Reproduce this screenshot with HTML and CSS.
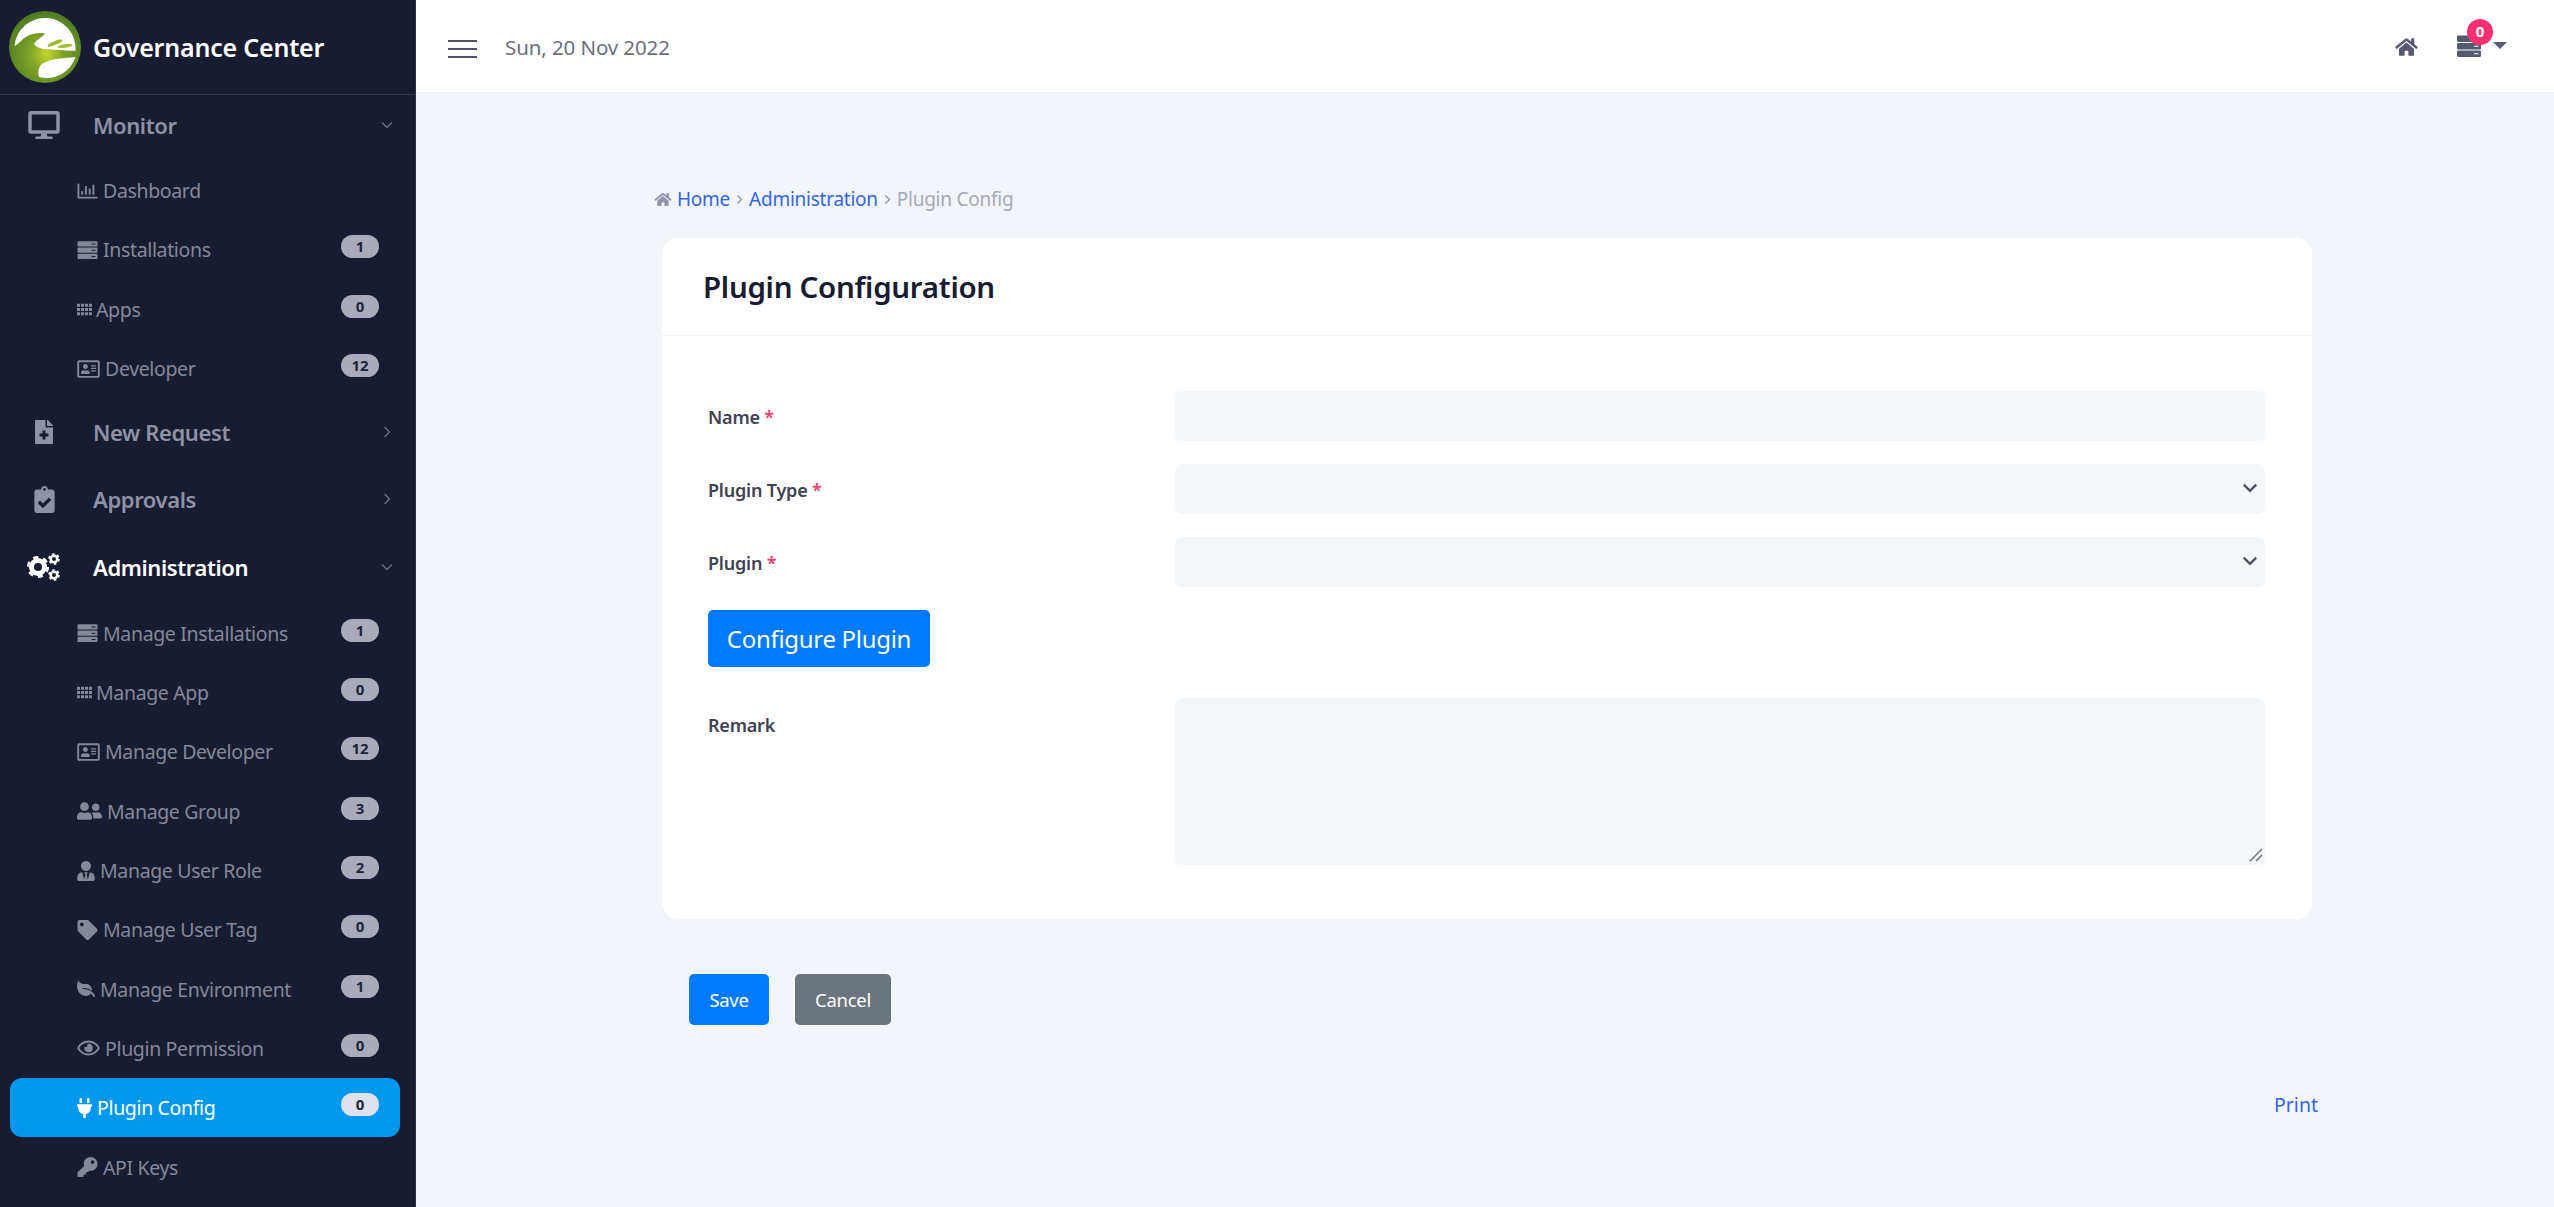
FILE: index.html
```html
<!DOCTYPE html>
<html lang="en">
<head>
    <meta charset="UTF-8">
    <title>Plugin Config</title>
    <link rel="stylesheet" href="styles.css">
</head>
<body>
    <svg class="icon-defs" xmlns="http://www.w3.org/2000/svg">
        <symbol id="i-desktop" viewBox="0 0 576 512"><path d="M528 0H48C21.5 0 0 21.5 0 48v320c0 26.5 21.5 48 48 48h192l-16 48h-72c-13.3 0-24 10.7-24 24s10.7 24 24 24h272c13.3 0 24-10.7 24-24s-10.7-24-24-24h-72l-16-48h192c26.5 0 48-21.5 48-48V48c0-26.5-21.5-48-48-48zm-16 352H64V64h448v288z"/></symbol>
        <symbol id="i-chart" viewBox="0 0 512 512"><path d="M396.8 352h22.4c6.4 0 12.8-6.4 12.8-12.8V108.8c0-6.4-6.4-12.8-12.8-12.8h-22.4c-6.4 0-12.8 6.4-12.8 12.8v230.4c0 6.4 6.4 12.8 12.8 12.8zm-192 0h22.4c6.4 0 12.8-6.4 12.8-12.8V140.8c0-6.4-6.4-12.8-12.8-12.8h-22.4c-6.4 0-12.8 6.4-12.8 12.8v198.4c0 6.4 6.4 12.8 12.8 12.8zm96 0h22.4c6.4 0 12.8-6.4 12.8-12.8V204.8c0-6.4-6.4-12.8-12.8-12.8h-22.4c-6.4 0-12.8 6.4-12.8 12.8v134.4c0 6.4 6.4 12.8 12.8 12.8zM496 400H48V80c0-8.84-7.16-16-16-16H16C7.16 64 0 71.16 0 80v336c0 17.67 14.33 32 32 32h464c8.84 0 16-7.16 16-16v-16c0-8.84-7.16-16-16-16zm-387.2-48h22.4c6.4 0 12.8-6.4 12.8-12.8v-70.4c0-6.4-6.4-12.8-12.8-12.8h-22.4c-6.4 0-12.8 6.4-12.8 12.8v70.4c0 6.4 6.4 12.8 12.8 12.8z"/></symbol>
        <symbol id="i-server" viewBox="0 0 512 512"><path fill-rule="evenodd" d="M24 32h464a24 24 0 0 1 24 24v88a24 24 0 0 1-24 24H24a24 24 0 0 1-24-24V56a24 24 0 0 1 24-24zm336 56v24h100V88zM24 192h464a24 24 0 0 1 24 24v88a24 24 0 0 1-24 24H24a24 24 0 0 1-24-24v-88a24 24 0 0 1 24-24zm336 56v24h100v-24zM24 352h464a24 24 0 0 1 24 24v88a24 24 0 0 1-24 24H24a24 24 0 0 1-24-24v-88a24 24 0 0 1 24-24zm336 56v24h100v-24z"/></symbol>
        <symbol id="i-th" viewBox="0 0 512 400"><path d="M0 0h104v104H0zM136 0h104v104H136zM272 0h104v104H272zM408 0h104v104H408zM0 148h104v104H0zM136 148h104v104H136zM272 148h104v104H272zM408 148h104v104H408zM0 296h104v104H0zM136 296h104v104H136zM272 296h104v104H272zM408 296h104v104H408z"/></symbol>
        <symbol id="i-idcard" viewBox="0 0 576 512"><path d="M528 32H48C21.5 32 0 53.5 0 80v352c0 26.5 21.5 48 48 48h480c26.5 0 48-21.5 48-48V80c0-26.5-21.5-48-48-48zm0 400H48V80h480v352zM208 256c35.3 0 64-28.7 64-64s-28.7-64-64-64-64 28.7-64 64 28.7 64 64 64zm-89.6 128h179.2c12.4 0 22.4-8.6 22.4-19.2v-19.2c0-31.8-30.1-57.6-67.2-57.6-10.8 0-18.7 8-44.8 8-26.9 0-33.4-8-44.8-8-37.1 0-67.2 25.8-67.2 57.6v19.2c0 10.6 10 19.2 22.4 19.2zM360 320h112c4.4 0 8-3.6 8-8v-16c0-4.4-3.6-8-8-8H360c-4.4 0-8 3.6-8 8v16c0 4.4 3.6 8 8 8zm0-64h112c4.4 0 8-3.6 8-8v-16c0-4.4-3.6-8-8-8H360c-4.4 0-8 3.6-8 8v16c0 4.4 3.6 8 8 8zm0-64h112c4.4 0 8-3.6 8-8v-16c0-4.4-3.6-8-8-8H360c-4.4 0-8 3.6-8 8v16c0 4.4 3.6 8 8 8z"/></symbol>
        <symbol id="i-file" viewBox="0 0 384 512"><path d="M377 105L279.1 7c-4.5-4.5-10.6-7-17-7H256v128h128v-6.1c0-6.3-2.5-12.4-7-16.9zm-153 31V0H24C10.7 0 0 10.7 0 24v464c0 13.3 10.7 24 24 24h336c13.3 0 24-10.7 24-24V160H248c-13.2 0-24-10.8-24-24zm64 160v48c0 4.4-3.6 8-8 8h-56v56c0 4.4-3.6 8-8 8h-48c-4.4 0-8-3.6-8-8v-56h-56c-4.4 0-8-3.6-8-8v-48c0-4.4 3.6-8 8-8h56v-56c0-4.4 3.6-8 8-8h48c4.4 0 8 3.6 8 8v56h56c4.4 0 8 3.6 8 8z"/></symbol>
        <symbol id="i-clipboard" viewBox="0 0 384 512"><path d="M336 64h-80c0-35.3-28.7-64-64-64s-64 28.7-64 64H48C21.5 64 0 85.5 0 112v352c0 26.5 21.5 48 48 48h288c26.5 0 48-21.5 48-48V112c0-26.5-21.5-48-48-48zM192 40c13.3 0 24 10.7 24 24s-10.7 24-24 24-24-10.7-24-24 10.7-24 24-24zm121.2 231.8l-143 141.8c-4.7 4.7-12.3 4.6-17-.1l-82.6-83.3c-4.7-4.7-4.6-12.3.1-17L99.1 285c4.7-4.7 12.3-4.6 17 .1l46 46.4 106-105.2c4.7-4.7 12.3-4.6 17 .1l28.2 28.4c4.7 4.8 4.6 12.3-.1 17z"/></symbol>
        <symbol id="i-cogs" viewBox="0 0 34 28">
            <circle cx="11" cy="14" r="6.5" fill="none" stroke="currentColor" stroke-width="5"/>
            <circle cx="11" cy="14" r="9.8" fill="none" stroke="currentColor" stroke-width="2.6" stroke-dasharray="5.1 5.16"/>
            <circle cx="27" cy="6" r="3.25" fill="none" stroke="currentColor" stroke-width="2.5"/>
            <circle cx="27" cy="6" r="5" fill="none" stroke="currentColor" stroke-width="1.6" stroke-dasharray="2.6 2.63"/>
            <circle cx="27" cy="22" r="3.25" fill="none" stroke="currentColor" stroke-width="2.5"/>
            <circle cx="27" cy="22" r="5" fill="none" stroke="currentColor" stroke-width="1.6" stroke-dasharray="2.6 2.63"/>
        </symbol>
        <symbol id="i-users" viewBox="0 0 640 512"><path d="M192 256c61.9 0 112-50.1 112-112S253.9 32 192 32 80 82.1 80 144s50.1 112 112 112zm76.8 32h-8.3c-20.8 10-43.9 16-68.5 16s-47.6-6-68.5-16h-8.3C51.6 288 0 339.6 0 403.2V432c0 26.5 21.5 48 48 48h288c26.5 0 48-21.5 48-48v-28.8c0-63.6-51.6-115.2-115.2-115.2zM480 256c53 0 96-43 96-96s-43-96-96-96-96 43-96 96 43 96 96 96zm48 32h-3.8c-13.9 4.8-28.6 8-44.2 8s-30.3-3.2-44.2-8H432c-20.4 0-39.2 5.9-55.7 15.4 24.4 26.3 39.7 61.2 39.7 99.8v38.4c0 2.2-.5 4.3-.6 6.4H592c26.5 0 48-21.5 48-48 0-61.9-50.1-112-112-112z"/></symbol>
        <symbol id="i-usertie" viewBox="0 0 448 512"><path d="M224 256c70.7 0 128-57.3 128-128S294.7 0 224 0 96 57.3 96 128s57.3 128 128 128zm95.8 32.6L272 480l-32-136 32-56h-96l32 56-32 136-47.8-191.4C56.9 292 0 350.3 0 422.4V464c0 26.5 21.5 48 48 48h352c26.5 0 48-21.5 48-48v-41.6c0-72.1-56.9-130.4-128.2-133.8z"/></symbol>
        <symbol id="i-tag" viewBox="0 0 512 512"><path d="M0 252.118V48C0 21.49 21.49 0 48 0h204.118a48 48 0 0 1 33.941 14.059l211.882 211.882c18.745 18.745 18.745 49.137 0 67.882L293.823 497.941c-18.745 18.745-49.137 18.745-67.882 0L14.059 286.059A48 48 0 0 1 0 252.118zM112 64c-26.51 0-48 21.49-48 48s21.49 48 48 48 48-21.49 48-48-21.49-48-48-48z"/></symbol>
        <symbol id="i-leaf" viewBox="0 0 576 512"><path d="M546.2 9.7c-5.6-12.5-21.6-13-28.3-1.2C486.9 62.4 431.4 96 368 96h-80C182 96 96 182 96 288c0 7 .8 13.7 1.5 20.5C161.3 262.8 253.4 224 384 224c8.8 0 16 7.2 16 16s-7.2 16-16 16C132.6 256 26 410.1 2.4 468c-6.6 16.3 1.2 34.9 17.5 41.6 16.4 6.8 35-1.1 41.8-17.3 1.5-3.6 20.9-47.9 71.9-90.6 32.4 43.9 94 85.8 174.9 77.2C465.5 467.5 576 326.7 576 154.3c0-50.2-10.8-102.2-29.8-144.6z"/></symbol>
        <symbol id="i-eye" viewBox="0 0 576 512"><path d="M288 144a110.94 110.94 0 0 0-31.24 5 55.4 55.4 0 0 1 7.24 27 56 56 0 0 1-56 56 55.4 55.4 0 0 1-27-7.24A111.71 111.71 0 1 0 288 144zm284.52 97.4C518.29 135.59 410.93 64 288 64S57.68 135.64 3.48 241.41a32.35 32.35 0 0 0 0 29.19C57.71 376.41 165.07 448 288 448s230.32-71.64 284.52-177.41a32.35 32.35 0 0 0 0-29.19zM288 400c-98.65 0-189.09-55-237.93-144C98.91 167 189.34 112 288 112s189.09 55 237.93 144C477.1 345 386.66 400 288 400z"/></symbol>
        <symbol id="i-plug" viewBox="0 0 384 512"><path d="M320,32a32,32,0,0,0-64,0v96h64Zm48,128H16A16,16,0,0,0,0,176v32a16,16,0,0,0,16,16H32v32A160.07,160.07,0,0,0,160,412.8V512H224V412.8A160.07,160.07,0,0,0,352,256V224h16a16,16,0,0,0,16-16V176A16,16,0,0,0,368,160ZM128,32a32,32,0,0,0-64,0v96h64Z"/></symbol>
        <symbol id="i-key" viewBox="0 0 512 512"><path d="M512 176.001C512 273.203 433.202 352 336 352c-11.22 0-22.19-1.062-32.827-3.069l-24.012 27.014A23.999 23.999 0 0 1 261.223 384H224v40c0 13.255-10.745 24-24 24h-40v40c0 13.255-10.745 24-24 24H24c-13.255 0-24-10.745-24-24v-78.059c0-6.365 2.529-12.47 7.029-16.971l161.802-161.802C163.108 213.814 160 195.271 160 176 160 78.798 238.797.001 335.999 0 433.488-.001 512 78.511 512 176.001zM336 128c0 26.51 21.49 48 48 48s48-21.49 48-48-21.49-48-48-48-48 21.49-48 48z"/></symbol>
        <symbol id="i-home" viewBox="0 0 576 512"><path d="M280.37 148.26L96 300.11V464a16 16 0 0 0 16 16l112.06-.29a16 16 0 0 0 15.92-16V368a16 16 0 0 1 16-16h64a16 16 0 0 1 16 16v95.64a16 16 0 0 0 16 16.05L464 480a16 16 0 0 0 16-16V300L295.67 148.26a12.19 12.19 0 0 0-15.3 0zM571.6 251.47L488 182.56V44.05a12 12 0 0 0-12-12h-56a12 12 0 0 0-12 12v72.61L318.47 43a48 48 0 0 0-61 0L4.34 251.47a12 12 0 0 0-1.6 16.9l25.5 31A12 12 0 0 0 45.15 301l235.22-193.74a12.19 12.19 0 0 1 15.3 0L530.9 301a12 12 0 0 0 16.9-1.6l25.5-31a12 12 0 0 0-1.7-16.93z"/></symbol>
    </svg>

    <div class="app">
        <aside class="sidebar">
            <div class="brand">
                <svg class="brand-logo" xmlns="http://www.w3.org/2000/svg" viewBox="0 0 72 72">
                    <defs>
                        <radialGradient id="logoGreen" cx="52%" cy="60%" r="58%">
                            <stop offset="0" stop-color="#c6d82c"/>
                            <stop offset="0.4" stop-color="#7fa428"/>
                            <stop offset="1" stop-color="#4f7d22"/>
                        </radialGradient>
                    </defs>
                    <circle cx="36" cy="36" r="36" fill="url(#logoGreen)"/>
                    <path fill="#fff" d="M5.5 35A30.5 30.5 0 0 1 66.5 40L34 38C30 37 26 35 25 33 28 28 34 26 36 22.5 28 21 20 23 14 28 11 31 8 34 5.5 35Z"/>
                    <path fill="#fff" d="M66.5 46C55 47 42 48 37 51 31 53 28 58 30 66A30.5 30.5 0 0 0 66.5 46Z"/>
                    <ellipse cx="46" cy="32" rx="8" ry="2" fill="#9dba2c" transform="rotate(-22 46 32)"/>
                    <ellipse cx="56" cy="35" rx="7.5" ry="1.8" fill="#a4bf30" transform="rotate(-8 56 35)"/>
                </svg>
                <span class="brand-name">Governance Center</span>
            </div>
            <nav class="menu">
                <a class="menu-item" href="#"><span class="menu-icon"><svg class="icon i-monitor"><use href="#i-desktop"/></svg></span><span class="menu-label">Monitor</span><svg class="chev" viewBox="0 0 16 16"><path d="M3 5.5l5 5 5-5"/></svg></a>
                <div class="submenu">
                    <a class="sub-item" href="#"><svg class="sub-icon w20"><use href="#i-chart"/></svg>Dashboard</a>
                    <a class="sub-item" href="#"><svg class="sub-icon w20"><use href="#i-server"/></svg>Installations<span class="badge">1</span></a>
                    <a class="sub-item" href="#"><svg class="sub-icon w14"><use href="#i-th"/></svg>Apps<span class="badge">0</span></a>
                    <a class="sub-item" href="#"><svg class="sub-icon w23"><use href="#i-idcard"/></svg>Developer<span class="badge">12</span></a>
                </div>
                <a class="menu-item" href="#"><span class="menu-icon"><svg class="icon i-file"><use href="#i-file"/></svg></span><span class="menu-label">New Request</span><svg class="chev" viewBox="0 0 16 16"><path d="M5.5 3l5 5-5 5"/></svg></a>
                <a class="menu-item" href="#"><span class="menu-icon"><svg class="icon i-clip"><use href="#i-clipboard"/></svg></span><span class="menu-label">Approvals</span><svg class="chev" viewBox="0 0 16 16"><path d="M5.5 3l5 5-5 5"/></svg></a>
                <a class="menu-item is-open" href="#"><span class="menu-icon"><svg class="icon i-cogs"><use href="#i-cogs"/></svg></span><span class="menu-label">Administration</span><svg class="chev" viewBox="0 0 16 16"><path d="M3 5.5l5 5 5-5"/></svg></a>
                <div class="submenu submenu-admin">
                    <a class="sub-item" href="#"><svg class="sub-icon w20"><use href="#i-server"/></svg>Manage Installations<span class="badge">1</span></a>
                    <a class="sub-item" href="#"><svg class="sub-icon w14"><use href="#i-th"/></svg>Manage App<span class="badge">0</span></a>
                    <a class="sub-item" href="#"><svg class="sub-icon w23"><use href="#i-idcard"/></svg>Manage Developer<span class="badge">12</span></a>
                    <a class="sub-item" href="#"><svg class="sub-icon w25"><use href="#i-users"/></svg>Manage Group<span class="badge">3</span></a>
                    <a class="sub-item" href="#"><svg class="sub-icon w18"><use href="#i-usertie"/></svg>Manage User Role<span class="badge">2</span></a>
                    <a class="sub-item" href="#"><svg class="sub-icon w20"><use href="#i-tag"/></svg>Manage User Tag<span class="badge">0</span></a>
                    <a class="sub-item" href="#"><svg class="sub-icon w18 flip"><use href="#i-leaf"/></svg>Manage Environment<span class="badge">1</span></a>
                    <a class="sub-item" href="#"><svg class="sub-icon w23"><use href="#i-eye"/></svg>Plugin Permission<span class="badge">0</span></a>
                    <a class="sub-item active" href="#"><svg class="sub-icon w15"><use href="#i-plug"/></svg>Plugin Config<span class="badge">0</span></a>
                    <a class="sub-item" href="#"><svg class="sub-icon w20"><use href="#i-key"/></svg>API Keys</a>
                </div>
            </nav>
        </aside>

        <div class="main">
            <header class="topbar">
                <button class="hamburger" type="button"><span></span><span></span><span></span></button>
                <span class="today">Sun, 20 Nov 2022</span>
                <div class="topbar-right">
                    <svg class="top-home"><use href="#i-home"/></svg>
                    <div class="top-server">
                        <svg class="top-server-icon"><use href="#i-server"/></svg>
                        <span class="top-badge">0</span>
                        <span class="caret"></span>
                    </div>
                </div>
            </header>

            <div class="content">
                <div class="breadcrumb">
                    <svg class="crumb-home"><use href="#i-home"/></svg>
                    <a href="#">Home</a>
                    <svg class="crumb-sep" viewBox="0 0 16 16"><path d="M5.5 3l5 5-5 5"/></svg>
                    <a href="#">Administration</a>
                    <svg class="crumb-sep" viewBox="0 0 16 16"><path d="M5.5 3l5 5-5 5"/></svg>
                    <span class="crumb-current">Plugin Config</span>
                </div>

                <section class="card">
                    <h1 class="card-title">Plugin Configuration</h1>
                    <form class="card-body">
                        <div class="form-row">
                            <label for="name">Name <span class="req">*</span></label>
                            <input class="field" type="text" id="name">
                        </div>
                        <div class="form-row">
                            <label for="ptype">Plugin Type <span class="req">*</span></label>
                            <div class="select-wrap">
                                <select class="field" id="ptype"></select>
                                <svg class="select-chev" viewBox="0 0 16 16"><path d="M2.5 5l5.5 5.5L13.5 5"/></svg>
                            </div>
                        </div>
                        <div class="form-row">
                            <label for="plugin">Plugin <span class="req">*</span></label>
                            <div class="select-wrap">
                                <select class="field" id="plugin"></select>
                                <svg class="select-chev" viewBox="0 0 16 16"><path d="M2.5 5l5.5 5.5L13.5 5"/></svg>
                            </div>
                        </div>
                        <button class="btn btn-configure" type="button">Configure Plugin</button>
                        <div class="form-row form-row-top">
                            <label for="remark">Remark</label>
                            <div class="area-wrap">
                                <textarea class="field field-area" id="remark"></textarea>
                                <svg class="area-grip" viewBox="0 0 14 14"><path d="M1 13L13 1M7 13l6-6"/></svg>
                            </div>
                        </div>
                    </form>
                </section>

                <div class="actions">
                    <button class="btn btn-primary" type="button">Save</button>
                    <button class="btn btn-cancel" type="button">Cancel</button>
                </div>

                <div class="print-row"><a href="#">Print</a></div>
            </div>
        </div>
    </div>
</body>
</html>
```

FILE: styles.css
```css
* {
    margin: 0;
    padding: 0;
    box-sizing: border-box;
}
html, body {
    height: 100%;
    overflow: hidden;
}
body {
    font-family: "Noto Sans", "Open Sans", sans-serif;
    background-color: #f2f5f9;
    color: #333;
}
a {
    text-decoration: none;
}
.icon-defs {
    display: none;
}
.app {
    display: flex;
    height: 100%;
}

/* sidebar */
.sidebar {
    width: 416px;
    flex-shrink: 0;
    background-color: #181c33;
    border-right: 1px solid #2d3146;
    overflow: hidden;
}
.brand {
    display: flex;
    align-items: center;
    height: 95px;
    padding-left: 9px;
    padding-bottom: 1px;
    border-bottom: 1px solid #34384c;
}
.brand-logo {
    width: 72px;
    height: 72px;
}
.brand-name {
    margin-left: 12px;
    color: #fff;
    font-size: 25px;
    font-weight: 600;
    letter-spacing: -0.2px;
}
.menu-item {
    display: flex;
    align-items: center;
    height: 67.5px;
    color: #8f91a6;
    font-size: 22px;
    font-weight: 600;
}
.menu-item:first-child {
    height: 60px;
    margin-bottom: 6px;
}
.menu-item.is-open {
    color: #fff;
}
.menu-icon {
    display: flex;
    justify-content: center;
    width: 93px;
    padding-right: 5px;
}
.icon {
    fill: currentColor;
    color: inherit;
}
.i-monitor {
    width: 32px;
    height: 28px;
}
.i-file {
    width: 18px;
    height: 24px;
}
.i-clip {
    width: 21px;
    height: 27px;
}
.i-cogs {
    width: 34px;
    height: 28px;
}
.menu-label {
    flex: 1;
    letter-spacing: -0.4px;
}
.chev {
    width: 16px;
    height: 16px;
    margin-right: 20px;
    fill: none;
    stroke: #6d7086;
    stroke-width: 1.4;
}
.submenu-admin {
    padding-top: 3px;
}
.sub-item {
    display: flex;
    align-items: center;
    height: 59.3px;
    margin: 0 15px 0 10px;
    padding: 0 21px 0 67px;
    border-radius: 12px;
    color: #85879b;
    font-size: 19.5px;
    letter-spacing: -0.35px;
}
.sub-item.active {
    background-color: #0098ec;
    color: #fff;
}
.sub-icon {
    height: 20px;
    margin-right: 5px;
    fill: currentColor;
    flex-shrink: 0;
}
.sub-icon.flip {
    transform: scaleX(-1);
}
.w14 { width: 15px; height: 13px; margin-right: 4px; }
.w15 { width: 15px; height: 20px; }
.w18 { width: 18px; }
.w20 { width: 21px; }
.w23 { width: 23px; }
.w25 { width: 25px; }
.badge {
    margin-left: auto;
    margin-bottom: 6px;
    width: 38px;
    height: 23px;
    border-radius: 12px;
    background-color: #a9abbb;
    color: #20243a;
    font-size: 15px;
    font-weight: 700;
    line-height: 23px;
    text-align: center;
    letter-spacing: 0;
}
.active .badge {
    background-color: #dfe2ec;
}

/* top bar */
.main {
    flex: 1;
    min-width: 0;
}
.topbar {
    display: flex;
    align-items: center;
    height: 93px;
    padding-left: 32px;
    background-color: #fff;
    border-bottom: 1px solid #eef1f5;
}
.hamburger {
    display: flex;
    flex-direction: column;
    justify-content: space-between;
    width: 29px;
    height: 18px;
    margin-top: 5px;
    background: none;
    border: none;
}
.hamburger span {
    display: block;
    height: 2px;
    background-color: #4e5169;
}
.today {
    margin-left: 28px;
    margin-top: 2px;
    color: #6c6f80;
    font-size: 20.5px;
    letter-spacing: -0.1px;
}
.topbar-right {
    display: flex;
    align-items: center;
    margin-left: auto;
    padding-right: 47px;
}
.top-home {
    width: 23px;
    height: 20px;
    margin-right: 39px;
    margin-top: 2px;
    fill: #565a72;
}
.top-server {
    position: relative;
    display: flex;
    align-items: center;
}
.top-server-icon {
    width: 24px;
    height: 24px;
    fill: #565a72;
}
.top-badge {
    position: absolute;
    left: 10px;
    top: -15px;
    width: 26px;
    height: 26px;
    border-radius: 50%;
    background-color: #fb2f72;
    color: #fff;
    font-size: 15px;
    font-weight: 700;
    line-height: 25px;
    text-align: center;
}
.caret {
    width: 0;
    height: 0;
    margin-left: 12px;
    margin-top: -2px;
    border-left: 7px solid transparent;
    border-right: 7px solid transparent;
    border-top: 7px solid #565a72;
}

/* page content */
.content {
    padding: 92px 243px 0 238px;
}
.breadcrumb {
    display: flex;
    align-items: center;
    height: 28px;
    font-size: 19px;
    letter-spacing: -0.25px;
}
.breadcrumb a {
    color: #3366e8;
}
.crumb-home {
    width: 18px;
    height: 15px;
    margin-right: 5px;
    fill: #9295a8;
}
.crumb-sep {
    width: 13px;
    height: 13px;
    margin: 0 3px;
    fill: none;
    stroke: #8f92a5;
    stroke-width: 1.6;
}
.crumb-current {
    color: #a5a8b8;
}
.card {
    margin: 25px 0 0 8px;
    width: 1650px;
    background-color: #fff;
    border-radius: 16px;
}
.card-title {
    height: 98px;
    padding: 0 41px;
    border-bottom: 1px solid #eff2f5;
    color: #181c32;
    font-size: 29.5px;
    font-weight: 600;
    line-height: 98px;
    letter-spacing: -0.3px;
}
.card-body {
    padding: 55px 47px 54px 46px;
}
.form-row {
    display: flex;
    align-items: center;
    margin-bottom: 23px;
}
.form-row label {
    width: 467px;
    flex-shrink: 0;
    padding-top: 2px;
    color: #3f4254;
    font-size: 18px;
    font-weight: 600;
    letter-spacing: -0.2px;
}
.form-row .req {
    color: #f1416c;
}
.field {
    display: block;
    width: 100%;
    height: 50px;
    border: none;
    border-radius: 7px;
    background-color: #f4f7fa;
    appearance: none;
    outline: none;
}
.select-wrap {
    position: relative;
    flex: 1;
}
.select-chev {
    position: absolute;
    right: 6px;
    top: 15px;
    width: 18px;
    height: 18px;
    fill: none;
    stroke: #4b4f5e;
    stroke-width: 2;
}
.form-row-top {
    align-items: flex-start;
    margin: 31px 0 0;
}
.form-row-top label {
    margin-top: 13px;
}
.area-wrap {
    position: relative;
    flex: 1;
}
.field-area {
    height: 167px;
    resize: none;
}
.area-grip {
    position: absolute;
    right: 2px;
    bottom: 3px;
    width: 14px;
    height: 14px;
    fill: none;
    stroke: #6f7278;
    stroke-width: 1.5;
}
.btn {
    display: block;
    border: none;
    border-radius: 5px;
    color: #fff;
    font-family: inherit;
}
.btn-configure {
    width: 222px;
    height: 57px;
    background-color: #007bff;
    font-size: 24px;
    letter-spacing: -0.3px;
}
.actions {
    display: flex;
    gap: 26px;
    margin: 55px 0 0 35px;
}
.btn-primary {
    width: 80px;
    height: 51px;
    background-color: #007bff;
    font-size: 18.5px;
    letter-spacing: -0.3px;
}
.btn-cancel {
    width: 96px;
    height: 51px;
    background-color: #6c757d;
    font-size: 18.5px;
    letter-spacing: -0.3px;
}
.print-row {
    margin-top: 66px;
    text-align: right;
    width: 1664px;
    font-size: 19.5px;
}
.print-row a {
    color: #3366e8;
}
```
